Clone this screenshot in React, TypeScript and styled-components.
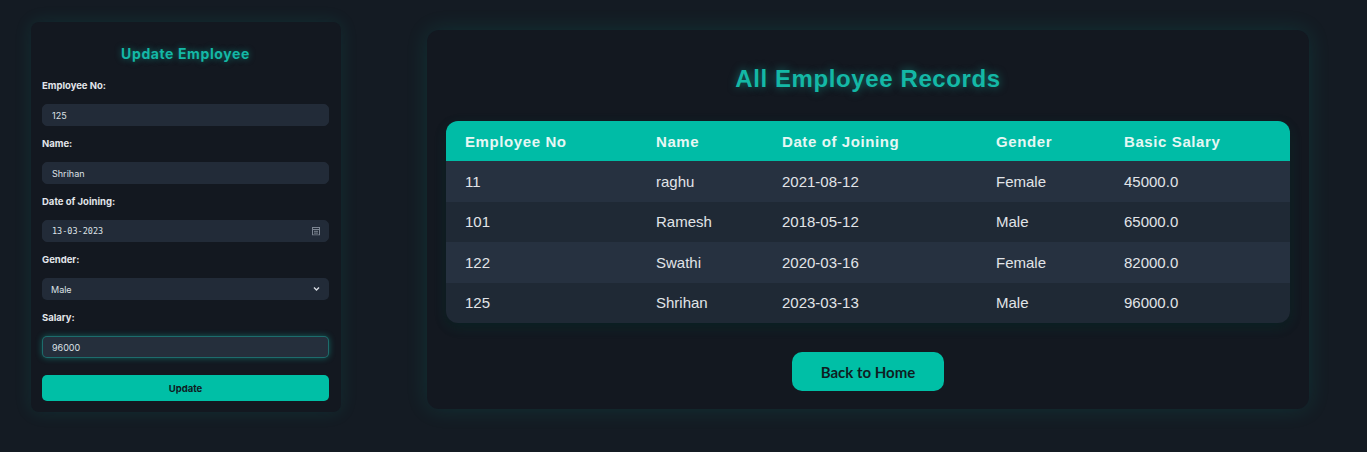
import styled, { createGlobalStyle } from 'styled-components';

const GlobalStyle = createGlobalStyle`
  html, body {
    margin: 0;
    padding: 0;
    background: #141b23;
  }
  body {
    font-family: Inter, 'Noto Sans', sans-serif;
    color: #e5e7eb;
  }
`;

const employees = [
  { no: '11', name: 'raghu', doj: '2021-08-12', gender: 'Female', salary: '45000.0' },
  { no: '101', name: 'Ramesh', doj: '2018-05-12', gender: 'Male', salary: '65000.0' },
  { no: '122', name: 'Swathi', doj: '2020-03-16', gender: 'Female', salary: '82000.0' },
  { no: '125', name: 'Shrihan', doj: '2023-03-13', gender: 'Male', salary: '96000.0' },
];

// widths are content widths, the 19px side padding comes on top
const columns = [
  { label: 'Employee No', width: 153 },
  { label: 'Name', width: 88 },
  { label: 'Date of Joining', width: 176 },
  { label: 'Gender', width: 90 },
  { label: 'Basic Salary', width: 147 },
];

const Page = styled.div`
  display: flex;
  align-items: flex-start;
  gap: 86px;
  padding: 22px 58px 0 31px;
  height: 452px;
  box-sizing: border-box;
`;

const FormCard = styled.form`
  width: 310px;
  box-sizing: border-box;
  padding: 23px 12px 11px 11px;
  background: #131820;
  border-radius: 8px;
  box-shadow: 0 0 18px rgba(0, 191, 166, 0.12);
`;

const FormTitle = styled.h2`
  margin: 0 0 17px;
  text-align: center;
  font-size: 14px;
  line-height: 18px;
  font-weight: 700;
  letter-spacing: 0.6px;
  color: #14b8a6;
  text-shadow: 0 0 6px rgba(20, 184, 166, 0.55);
`;

const Field = styled.div`
  display: flex;
  flex-direction: column;
  margin-bottom: 12px;
`;

const Label = styled.label`
  font-size: 9.5px;
  line-height: 12px;
  font-weight: 700;
  color: #e2e5ea;
  margin-bottom: 12px;
`;

const Control = styled.div`
  position: relative;
`;

const Input = styled.input<{ $focused?: boolean; $mono?: boolean }>`
  display: block;
  width: 100%;
  height: 22px;
  box-sizing: border-box;
  padding: 0 9px;
  border-radius: 5px;
  border: 1px solid ${(p) => (p.$focused ? 'rgba(20, 184, 166, 0.45)' : '#222b38')};
  background: ${(p) => (p.$focused ? '#252f3c' : '#222b38')};
  box-shadow: ${(p) => (p.$focused ? '0 0 6px rgba(20, 184, 166, 0.45)' : 'none')};
  color: #dde1e6;
  font-family: ${(p) => (p.$mono ? "'DejaVu Sans Mono', monospace" : "Inter, 'Noto Sans', sans-serif")};
  font-size: ${(p) => (p.$mono ? '8.5px' : '9px')};
  outline: none;
`;

const Select = styled.select`
  display: block;
  width: 100%;
  height: 22px;
  box-sizing: border-box;
  padding: 0 9px;
  border-radius: 5px;
  border: none;
  background: #222b38;
  color: #dde1e6;
  font-family: Inter, 'Noto Sans', sans-serif;
  font-size: 9px;
  appearance: none;
  outline: none;
`;

const TrailingIcon = styled.span`
  position: absolute;
  right: 9px;
  top: 50%;
  transform: translateY(-50%);
  display: flex;
  color: #7c8591;
  pointer-events: none;
`;

const SubmitButton = styled.button`
  display: block;
  width: 100%;
  height: 26px;
  margin-top: 17px;
  border: none;
  border-radius: 5px;
  background: #00bfa6;
  color: #0f1a1f;
  font-family: Inter, 'Noto Sans', sans-serif;
  font-size: 9.5px;
  font-weight: 700;
`;

const RecordsCard = styled.section`
  width: 882px;
  margin-top: 8px;
  box-sizing: border-box;
  padding: 19px 19px 18px;
  background: #131820;
  border-radius: 12px;
  box-shadow: 0 0 22px rgba(0, 191, 166, 0.14);
  display: flex;
  flex-direction: column;
  align-items: center;
`;

const RecordsTitle = styled.h1`
  margin: 16px 0 28px;
  font-family: 'Liberation Sans', Arial, sans-serif;
  font-size: 24px;
  line-height: 28px;
  font-weight: 700;
  letter-spacing: 0.6px;
  color: #14b8a6;
  text-shadow: 0 0 8px rgba(20, 184, 166, 0.55);
`;

const TableWrap = styled.div`
  width: 100%;
  border-radius: 12px;
  overflow: hidden;
  box-shadow: 0 4px 14px rgba(0, 191, 166, 0.12), 0 4px 10px rgba(0, 0, 0, 0.35);
`;

const Table = styled.table`
  width: 100%;
  border-collapse: collapse;
  table-layout: fixed;
  font-family: 'Liberation Sans', Arial, sans-serif;
`;

const Th = styled.th`
  height: 40px;
  padding: 0 19px;
  text-align: left;
  background: #00bca6;
  color: #e6f7f4;
  font-size: 15px;
  font-weight: 700;
  letter-spacing: 0.6px;
`;

const Row = styled.tr<{ $odd: boolean }>`
  background: ${(p) => (p.$odd ? '#263140' : '#1f2935')};
`;

const Td = styled.td`
  height: 40.5px;
  padding: 0 19px;
  font-size: 15px;
  color: #e1e4e8;
`;

const HomeButton = styled.button`
  margin-top: 29px;
  width: 152px;
  height: 39px;
  border: none;
  border-radius: 10px;
  background: #00bfa6;
  color: #0f1d22;
  font-family: Lato, Inter, sans-serif;
  font-size: 15px;
  font-weight: 700;
`;

function CalendarIcon() {
  return (
    <svg width="8" height="9" viewBox="0 0 8 9" fill="none" stroke="currentColor" strokeWidth="1">
      <rect x="0.5" y="1" width="7" height="7.5" />
      <line x1="0.5" y1="3" x2="7.5" y2="3" />
      <line x1="2" y1="4.8" x2="6" y2="4.8" />
      <line x1="2" y1="6.6" x2="6" y2="6.6" />
    </svg>
  );
}

function ChevronIcon() {
  return (
    <svg width="7" height="5" viewBox="0 0 7 5" fill="none" stroke="#d6dae0" strokeWidth="1.4">
      <polyline points="1,1 3.5,3.5 6,1" />
    </svg>
  );
}

export default function App() {
  return (
    <>
      <GlobalStyle />
      <Page>
        <FormCard onSubmit={(e) => e.preventDefault()}>
          <FormTitle>Update Employee</FormTitle>

          <Field>
            <Label>Employee No:</Label>
            <Input defaultValue="125" />
          </Field>

          <Field>
            <Label>Name:</Label>
            <Input defaultValue="Shrihan" />
          </Field>

          <Field>
            <Label>Date of Joining:</Label>
            <Control>
              <Input $mono defaultValue="13-03-2023" />
              <TrailingIcon>
                <CalendarIcon />
              </TrailingIcon>
            </Control>
          </Field>

          <Field>
            <Label>Gender:</Label>
            <Control>
              <Select defaultValue="Male">
                <option>Male</option>
                <option>Female</option>
              </Select>
              <TrailingIcon>
                <ChevronIcon />
              </TrailingIcon>
            </Control>
          </Field>

          <Field>
            <Label>Salary:</Label>
            <Input $focused defaultValue="96000" />
          </Field>

          <SubmitButton type="submit">Update</SubmitButton>
        </FormCard>

        <RecordsCard>
          <RecordsTitle>All Employee Records</RecordsTitle>
          <TableWrap>
            <Table>
              <thead>
                <tr>
                  {columns.map((c) => (
                    <Th key={c.label} style={{ width: c.width }}>
                      {c.label}
                    </Th>
                  ))}
                </tr>
              </thead>
              <tbody>
                {employees.map((emp, i) => (
                  <Row key={emp.no} $odd={i % 2 === 0}>
                    <Td>{emp.no}</Td>
                    <Td>{emp.name}</Td>
                    <Td>{emp.doj}</Td>
                    <Td>{emp.gender}</Td>
                    <Td>{emp.salary}</Td>
                  </Row>
                ))}
              </tbody>
            </Table>
          </TableWrap>
          <HomeButton>Back to Home</HomeButton>
        </RecordsCard>
      </Page>
    </>
  );
}
